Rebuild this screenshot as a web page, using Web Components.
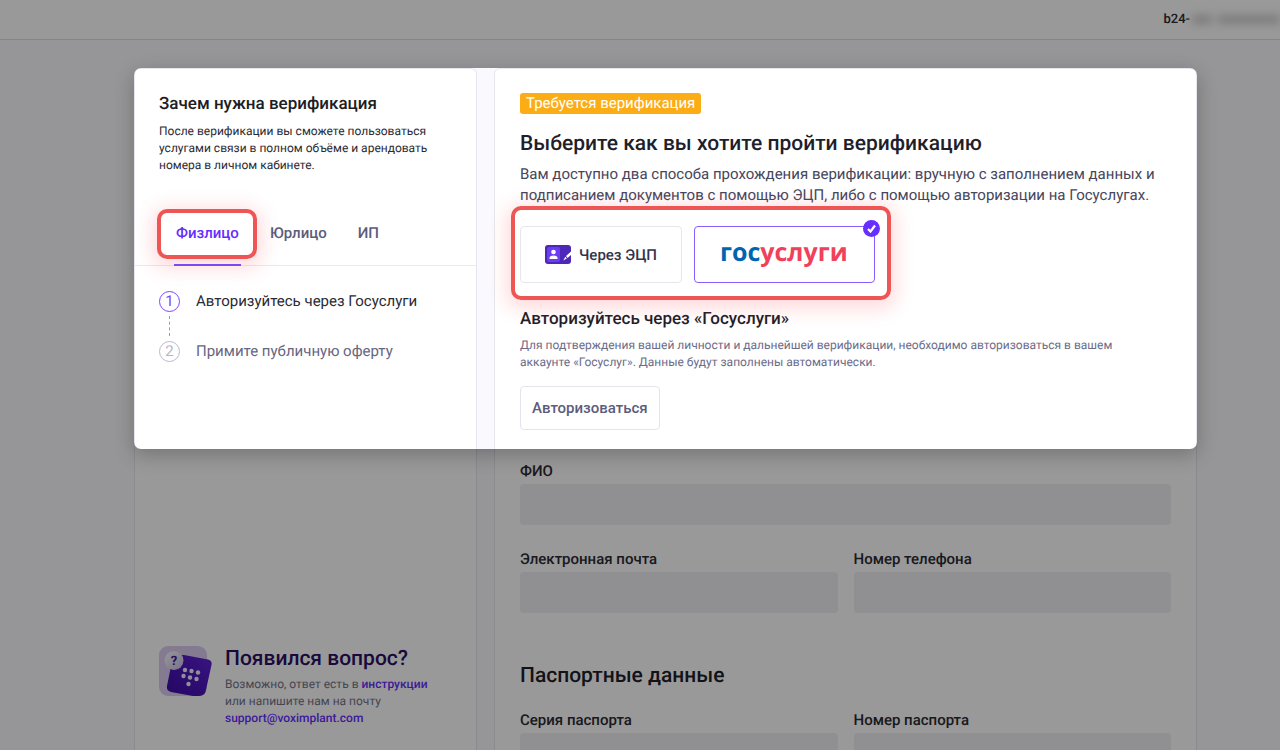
<!DOCTYPE html>
<html lang="ru">
<head>
<meta charset="utf-8">
<title>Верификация</title>
<style>
  body { margin: 0; font-family: Roboto, "Liberation Sans", sans-serif; color: #2b2b33; background: #fafafe; text-rendering: geometricPrecision; }
</style>
</head>
<body>
<verify-app></verify-app>
<script>
const define = (name, html, setup) => customElements.define(name, class extends HTMLElement {
  connectedCallback() {
    if (this.shadowRoot) return;
    const template = document.createElement('template');
    template.innerHTML = html;
    this.attachShadow({ mode: 'open' }).append(template.content.cloneNode(true));
    if (setup) setup(this, this.shadowRoot);
  }
});

define('top-bar', `
  <style>
    :host { display: flex; justify-content: flex-end; align-items: center; box-sizing: border-box; height: 40px; background: #fff; border-bottom: 1px solid #dcdce8; font-size: 13px; font-weight: 500; overflow: hidden; }
    .mask { display: flex; gap: 6px; width: 90px; filter: blur(4px); }
    .mask i { height: 9px; background: #d0d0d0; }
    .mask i:first-child { width: 20px; margin-left: 2px; }
    .mask i:last-child { flex: 1; }
  </style>
  <slot></slot><div class="mask" aria-hidden="true"><i></i><i></i></div>
`);

/* Red callout ring around whatever is slotted in */
define('red-ring', `
  <style>
    :host { display: block; position: relative; width: fit-content; }
    .ring { position: absolute; inset: var(--ring-inset, -8px); border: 4px solid #ee5656; border-radius: 10px; box-shadow: 0 4px 20px 4px rgba(255, 60, 70, .2); pointer-events: none; }
  </style>
  <div class="ring"></div><slot></slot>
`);

define('type-tabs', `
  <style>
    :host { display: flex; gap: 11px; padding: 0 31px; border-bottom: 1px solid #e9e9f0; }
    button { all: unset; box-sizing: border-box; position: relative; display: block; height: 64px; padding: 0 10px; font-size: 15px; font-weight: 500; line-height: 64px; color: #5c5c7c; cursor: pointer; }
    .active { color: #662eff; }
    .bar { position: absolute; left: 8px; right: 8px; bottom: -1px; height: 2px; background: #7a4cf0; }
    red-ring { --ring-inset: 8px -8px 6px -9px; }
  </style>
  <red-ring><button class="active" role="tab" aria-selected="true">Физлицо<span class="bar"></span></button></red-ring>
  <button role="tab">Юрлицо</button>
  <button role="tab">ИП</button>
`);

define('step-item', `
  <style>
    :host { display: flex; align-items: center; gap: 16px; height: 22px; font-size: 15px; line-height: 22px; color: #66667f; }
    b { box-sizing: border-box; width: 21px; height: 21px; border: 1px solid #b9b9cf; border-radius: 50%; font-weight: 400; line-height: 19px; text-align: center; color: #b4b4cb; }
    :host([active]) { color: #2b2b33; }
    :host([active]) b { border-color: #7a45ff; color: #7a45ff; }
  </style>
  <b></b><slot></slot>
`, (host, root) => { root.querySelector('b').textContent = host.getAttribute('number'); });

define('help-card', `
  <style>
    :host { display: flex; gap: 12px; padding: 0 24px 23px; }
    svg { flex: none; width: 54px; height: 52px; }
    h2 { margin: 0 0 4px; font-size: 21px; font-weight: 500; line-height: 26px; color: #2a0f66; }
    p { margin: 0; font-size: 12px; line-height: 17px; color: #74748a; }
    a { color: #662eff; font-weight: 500; text-decoration: none; }
    .text { white-space: nowrap; }
  </style>
  <svg viewBox="0 0 54 52" aria-hidden="true">
    <defs>
      <linearGradient id="g" x1="0" y1="1" x2="1" y2="0"><stop offset="0" stop-color="#3b0ba4"/><stop offset="1" stop-color="#5f22d8"/></linearGradient>
      <linearGradient id="w" x1="0" y1="0" x2="1" y2="1"><stop offset="0" stop-color="#fff"/><stop offset="1" stop-color="#c9bce9"/></linearGradient>
    </defs>
    <rect x="0" y="0" width="48" height="50" rx="9" fill="#dccdf2"/>
    <path d="M19 9h6l24 4.500q4.500 1 3.500 5.500l-6 27q-1.500 4-7 4H34L12 46q-5-1.500-4-6L14 10z" fill="url(#g)"/>
    <g fill="#f4efff"><circle cx="26" cy="24" r="2.200"/><circle cx="32.500" cy="25" r="2.200"/><circle cx="39" cy="26.500" r="2.200"/><circle cx="24.500" cy="30" r="2.200"/><circle cx="31" cy="31.500" r="2.200"/><circle cx="37.500" cy="33" r="2.200"/><circle cx="29.500" cy="38" r="2.200"/></g>
    <circle cx="15" cy="14.500" r="9.500" fill="url(#w)"/>
    <text x="15" y="19" text-anchor="middle" font-size="13" font-weight="700" fill="#3b1a9c">?</text>
  </svg>
  <div class="text">
    <h2>Появился вопрос?</h2>
    <p>Возможно, ответ есть в <a href="#guide">инструкции</a><br>или напишите нам на почту<br><a href="mailto:support@voximplant.com">support@voximplant.com</a></p>
  </div>
`);

define('side-panel', `
  <style>
    :host { display: flex; flex-direction: column; box-sizing: border-box; background: #fff; border: 1px solid #e6e6ef; border-bottom: 0; border-radius: 6px 6px 0 0; }
    .why { padding: 24px 24px 27px; }
    h2 { margin: 0 0 8px; font-size: 17px; font-weight: 500; line-height: 22px; color: #1d1d22; }
    p { margin: 0; font-size: 12px; line-height: 17px; }
    ol { display: flex; flex-direction: column; margin: 0; padding: 24px; list-style: none; }
    .dash { width: 0; height: 20px; margin: 4px 10px; border-left: 1px dashed #9a9ab0; }
    help-card { margin-top: auto; }
  </style>
  <div class="why">
    <h2>Зачем нужна верификация</h2>
    <p>После верификации вы сможете пользоваться услугами связи в полном объёме и арендовать номера в личном кабинете.</p>
  </div>
  <type-tabs role="tablist"></type-tabs>
  <ol>
    <li><step-item number="1" active>Авторизуйтесь через Госуслуги</step-item><div class="dash"></div></li>
    <li><step-item number="2">Примите публичную оферту</step-item></li>
  </ol>
  <help-card></help-card>
`);

define('method-option', `
  <style>
    :host { display: block; }
    label { position: relative; display: flex; align-items: center; justify-content: center; box-sizing: border-box; height: 57px; padding: 0 24px; border: 1px solid #e6e6ec; border-radius: 4px; background: #fff; cursor: pointer; }
    input { position: absolute; opacity: 0; margin: 0; }
    svg { display: none; position: absolute; top: -7px; right: -6px; width: 17px; height: 17px; }
    :host([selected]) label { border-color: #8a5cff; }
    :host([selected]) svg { display: block; }
  </style>
  <label><input type="radio" name="method"><slot></slot>
    <svg viewBox="0 0 17 17" aria-hidden="true"><circle cx="8.500" cy="8.500" r="8.500" fill="#662eff"/><path d="M5 9l2.500 2.500L12 5.500" fill="none" stroke="#fff" stroke-width="2.200"/></svg>
  </label>
`, (host, root) => { root.querySelector('input').checked = host.hasAttribute('selected'); });

define('sign-label', `
  <style>
    :host { display: flex; align-items: center; gap: 8px; font-size: 15px; font-weight: 500; color: #33334a; white-space: nowrap; }
    svg { width: 26px; height: 19px; }
  </style>
  <svg viewBox="0 0 26 19" aria-hidden="true">
    <rect width="26" height="19" rx="3" fill="#4d28b8"/>
    <rect x="2" y="2" width="13" height="15" rx="2" fill="#6a3df5"/>
    <circle cx="8.500" cy="7" r="2.300" fill="#fff"/>
    <path d="M4.500 14v-1q0-2.500 4-2.500t4 2.500v1z" fill="#fff"/>
    <path d="M26 6.500v3.500l-3.500 3-1.500-2zM20.300 11.800l1.500 1.700-3.500 2z" fill="#fff"/>
  </svg><slot></slot>
`);

define('gos-logo', `
  <style>
    :host { display: block; padding: 0 2px 5px 1px; font: 700 25px/34px "Open Sans", "Noto Sans", sans-serif; color: #f0405a; }
    .blue { color: #0065b1; }
  </style>
  <span class="blue">гос</span><span>услуги</span>
`);

define('text-field', `
  <style>
    :host { display: block; }
    label { display: block; margin-bottom: 3px; font-size: 15px; font-weight: 500; line-height: 20px; color: #2b2b33; }
    input { display: block; box-sizing: border-box; width: 100%; height: 41px; padding: 0 12px; border: 0; border-radius: 4px; background: #f1f1f5; font: inherit; }
  </style>
  <label for="f"></label><input id="f">
`, (host, root) => { root.querySelector('label').textContent = host.getAttribute('label'); });

define('main-panel', `
  <style>
    :host { display: block; box-sizing: border-box; padding: 24px 25px; background: #fff; border: 1px solid #e6e6ef; border-radius: 6px 6px 0 0; }
    .badge { width: fit-content; padding: 0 6px; border-radius: 3px; background: #fcac14; color: #fff; font-size: 15px; line-height: 21px; }
    h1, h2 { margin: 0; font-size: 21px; font-weight: 500; line-height: 28px; color: #1f1f2b; }
    h1 { margin: 16px 0 6px; }
    h3 { margin: 25px 0 7px; font-size: 17px; font-weight: 500; line-height: 22px; color: #1f1f2b; }
    p { margin: 0; }
    .lead { font-size: 15px; line-height: 21px; color: #46465c; }
    .note { max-width: 640px; font-size: 12px; line-height: 17px; color: #6c6c88; }
    .methods { display: flex; gap: 12px; }
    red-ring { margin-top: 20px; --ring-inset: -20px -16px -17px -9px; }
    button { box-sizing: border-box; height: 44px; margin: 15px 0 31px; padding: 0 11px; border: 1px solid #e4e4ee; border-radius: 4px; background: #fff; font: 500 15px/20px Roboto, sans-serif; color: #5c5c7c; cursor: pointer; }
    form { display: grid; grid-template-columns: 1fr 1fr; gap: 24px 16px; }
    .wide { grid-column: 1 / -1; }
    h2 { margin: 25px 0 -4px; }
  </style>
  <div class="badge">Требуется верификация</div>
  <h1>Выберите как вы хотите пройти верификацию</h1>
  <p class="lead">Вам доступно два способа прохождения верификации: вручную с заполнением данных и подписанием документов с помощью ЭЦП, либо с помощью авторизации на Госуслугах.</p>
  <red-ring><div class="methods">
    <method-option><sign-label>Через ЭЦП</sign-label></method-option>
    <method-option selected><gos-logo></gos-logo></method-option>
  </div></red-ring>
  <h3>Авторизуйтесь через «Госуслуги»</h3>
  <p class="note">Для подтверждения вашей личности и дальнейшей верификации, необходимо авторизоваться в вашем аккаунте «Госуслуг». Данные будут заполнены автоматически.</p>
  <button type="button">Авторизоваться</button>
  <form>
    <text-field class="wide" label="ФИО"></text-field>
    <text-field label="Электронная почта"></text-field>
    <text-field label="Номер телефона"></text-field>
    <h2 class="wide">Паспортные данные</h2>
    <text-field label="Серия паспорта"></text-field>
    <text-field label="Номер паспорта"></text-field>
  </form>
`);

define('verify-app', `
  <style>
    :host { display: flex; flex-direction: column; height: 100vh; overflow: hidden; }
    top-bar { flex: none; }
    main { position: relative; flex: 1; min-height: 0; display: flex; gap: 17px; margin: 28px 83px 0 134px; }
    side-panel { flex: 0 0 343px; }
    main-panel { flex: 1; height: fit-content; }
    .spotlight { position: absolute; z-index: 1; inset: 0 0 auto; height: 381px; border-radius: 7px; pointer-events: none; box-shadow: 0 6px 20px rgba(0, 0, 0, .24), 0 0 0 2000px rgba(0, 0, 0, .4); }
  </style>
  <top-bar>b24-</top-bar>
  <main>
    <side-panel></side-panel>
    <main-panel></main-panel>
    <div class="spotlight"></div>
  </main>
`);
</script>
</body>
</html>
